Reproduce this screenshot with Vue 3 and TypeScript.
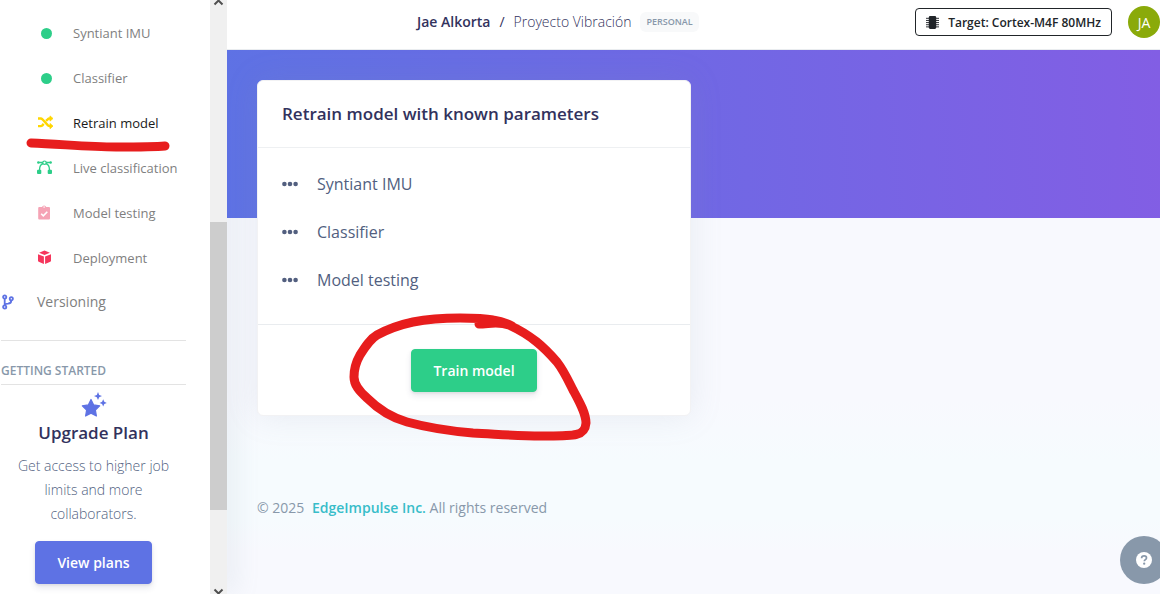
<script setup lang="ts">
interface NavItem {
  label: string
  icon: 'dot' | 'shuffle' | 'curve' | 'clipboard' | 'cube'
  active?: boolean
}

const navItems: NavItem[] = [
  { label: 'Syntiant IMU', icon: 'dot' },
  { label: 'Classifier', icon: 'dot' },
  { label: 'Retrain model', icon: 'shuffle', active: true },
  { label: 'Live classification', icon: 'curve' },
  { label: 'Model testing', icon: 'clipboard' },
  { label: 'Deployment', icon: 'cube' },
]

const steps: string[] = ['Syntiant IMU', 'Classifier', 'Model testing']
</script>

<template>
  <div class="page">
    <aside class="sidebar">
      <nav class="nav" aria-label="Project">
        <a
          v-for="item in navItems"
          :key="item.label"
          href="#"
          class="nav-link"
          :class="{ active: item.active }"
        >
          <svg v-if="item.icon === 'dot'" class="nav-icon" viewBox="0 0 16 16" aria-hidden="true">
            <circle cx="9.500" cy="8.500" r="5.500" fill="#2dce89" />
          </svg>
          <svg v-else-if="item.icon === 'shuffle'" class="nav-icon" viewBox="0 0 16 16" aria-hidden="true">
            <g fill="none" stroke="#ffd600" stroke-width="2.400">
              <path d="M1 3.500h2.700c.7 0 1.200.3 1.700.8l5.600 6c.5.500 1 .8 1.700.8h.8" />
              <path d="M1 11.100h2.700c.7 0 1.200-.3 1.700-.8l1.300-1.400M9 5.900l1.700-1.600c.500-.5 1-.8 1.700-.8h1.100" />
            </g>
            <path d="M13 .9v5.200l3-2.600zM13 8.500v5.200l3-2.600z" fill="#ffd600" stroke="#ffd600" stroke-width=".8" stroke-linejoin="round" />
          </svg>
          <svg v-else-if="item.icon === 'curve'" class="nav-icon" viewBox="0 0 16 16" aria-hidden="true">
            <g fill="none" stroke="#2dce89">
              <path d="M1.500 2.500h12M2.500 10c0-4 1.500-5.800 3.700-6.400M12.500 10c0-4-1.500-5.800-3.700-6.400" stroke-width="1.400" />
              <circle cx="7.500" cy="2.700" r="1.700" fill="#fff" stroke-width="1.200" />
            </g>
            <g fill="#2dce89">
              <circle cx="1.300" cy="2.500" r="1.200" />
              <circle cx="13.700" cy="2.500" r="1.200" />
              <rect x="0" y="9.700" width="4.300" height="4.200" rx="1" />
              <rect x="10.700" y="9.700" width="4.300" height="4.200" rx="1" />
            </g>
          </svg>
          <svg v-else-if="item.icon === 'clipboard'" class="nav-icon" viewBox="0 0 16 16" aria-hidden="true">
            <path d="M2.500 2H5a2.200 2.200 0 0 1 4.200 0h2.500c.8 0 1.300.5 1.300 1.300v10c0 .8-.5 1.300-1.300 1.300h-9.200c-.8 0-1.300-.5-1.300-1.300v-10c0-.8.5-1.300 1.300-1.300z" fill="#f5a3b5" />
            <circle cx="7.100" cy="2.100" r=".8" fill="#fff" />
            <path d="M4.200 8.700l2.100 2.100 4-4.100" fill="none" stroke="#fff" stroke-width="1.600" />
          </svg>
          <svg v-else class="nav-icon" viewBox="0 0 16 16" aria-hidden="true">
            <path d="M7.500 .5l5.400 2.200-5.400 2.300-5.400-2.300zM1 4.200l5.900 2.400v7.300L1.700 11.800C1.200 11.600 1 11.300 1 10.800zM14 4.200L8.100 6.600v7.300l5.200-2.100c.5-.2.7-.5.7-1z" fill="#f5365c" />
          </svg>
          <span>{{ item.label }}</span>
        </a>
        <a href="#" class="nav-link top-level">
          <svg class="nav-icon" viewBox="0 0 16 16" aria-hidden="true">
            <g fill="none" stroke="#5e72e4" stroke-width="1.800">
              <circle cx="3.700" cy="3" r="1.600" />
              <circle cx="3.700" cy="13" r="1.600" />
              <circle cx="10.300" cy="4.800" r="1.600" />
              <path d="M3.700 4.600v6.800M10.300 6.400c0 2.700-1.200 3-3.300 3.200-1.800.1-3 .5-3.300 1.500" />
            </g>
          </svg>
          <span>Versioning</span>
        </a>
      </nav>

      <h2 class="section-title">Getting started</h2>

      <section class="upgrade">
        <svg class="stars" viewBox="0 0 26 26" aria-hidden="true">
          <path d="M10 7.500l2.700 5.400 6 .9-4.300 4.200 1 6-5.400-2.800-5.400 2.800 1-6L1.300 13.800l6-.9z" fill="#5e72e4" stroke="#5e72e4" stroke-width="1.200" stroke-linejoin="round" />
          <path d="M17 0l1.200 2.900L21 4l-2.800 1.200L17 8l-1.200-2.800L13 4l2.800-1.100zM22.200 7.300l1.100 2.500 2.500 1.100-2.500 1.100-1.100 2.500-1.100-2.500-2.500-1.100 2.500-1.100z" fill="#5e72e4" />
        </svg>
        <h3>Upgrade Plan</h3>
        <p>Get access to higher job limits and more collaborators.</p>
        <button type="button" class="btn btn-primary">View plans</button>
      </section>

      <svg class="underline-mark" viewBox="0 0 150 20" aria-hidden="true">
        <path d="M9 8C38 9 66 12 94 12S132 12 143 11" fill="none" stroke="#e71d1d" stroke-width="9" stroke-linecap="round" />
      </svg>
    </aside>

    <div class="scrollbar" aria-hidden="true">
      <div class="track-before">
        <svg viewBox="0 0 17 6"><path d="M4.500 4.500l4-4 4 4" fill="none" stroke="#505050" stroke-width="2" /></svg>
      </div>
      <div class="thumb"></div>
      <div class="track-after">
        <svg viewBox="0 0 17 6"><path d="M4.500 1.500l4 4 4-4" fill="none" stroke="#505050" stroke-width="2" /></svg>
      </div>
    </div>

    <div class="main">
      <header class="topbar">
        <div class="crumbs">
          <a href="#" class="owner">Jae Alkorta</a>
          <span class="slash">/</span>
          <a href="#" class="project">Proyecto Vibración</a>
          <span class="badge">PERSONAL</span>
        </div>
        <div class="actions">
          <button type="button" class="target">
            <svg viewBox="0 0 14 14" aria-hidden="true">
              <rect x="3" y="0" width="8" height="14" rx="1.500" fill="#212529" />
              <path d="M0 2.500h14M0 4.800h14M0 7.100h14M0 9.400h14M0 11.700h14" stroke="#212529" stroke-width="1" />
            </svg>
            <span>Target: Cortex-M4F 80MHz</span>
          </button>
          <button type="button" class="avatar">JA</button>
        </div>
      </header>

      <main class="content">
        <section class="card">
          <h1>Retrain model with known parameters</h1>
          <ul>
            <li v-for="step in steps" :key="step">
              <svg viewBox="0 0 16 6" aria-hidden="true">
                <g fill="#525f7f">
                  <circle cx="2.400" cy="3" r="2.300" />
                  <circle cx="8" cy="3" r="2.300" />
                  <circle cx="13.600" cy="3" r="2.300" />
                </g>
              </svg>
              <span>{{ step }}</span>
            </li>
          </ul>
          <div class="card-footer">
            <button type="button" class="btn btn-success">Train model</button>
          </div>
          <svg class="circle-mark" viewBox="0 0 250 135" aria-hidden="true">
            <path d="M134 15C144 15 153 12 164 16C186 26 199 38 212 53C219 62 223 71 228 81C234 92 241 104 241 114C240 128 228 127 196 127C172 127 150 125 128 124C104 122 84 119 62 113C48 109 33 100 22 89C14 82 9 76 9 68C9 60 11 53 15 46C20 38 25 30 32 26C43 20 54 16 68 13C83 10 99 9 115 9C127 9 138 9 148 11C155 12 161 14 167 17" fill="none" stroke="#e71d1d" stroke-width="9" stroke-linecap="round" stroke-linejoin="round" />
          </svg>
        </section>
      </main>

      <footer class="footer">© 2025 <a href="#">EdgeImpulse Inc.</a> All rights reserved</footer>
    </div>

    <button type="button" class="help" aria-label="Help">
      <svg viewBox="0 0 16 16" aria-hidden="true">
        <circle cx="8" cy="8" r="8" fill="#fff" />
        <path d="M5.600 6.200c0-1.500 1-2.300 2.500-2.300s2.400.8 2.400 2c0 1.800-2.200 1.600-2.200 3.300" fill="none" stroke="#8898aa" stroke-width="1.700" />
        <circle cx="8.200" cy="11.700" r="1.150" fill="#8898aa" />
      </svg>
    </button>
  </div>
</template>

<style>
body {
  margin: 0;
}
</style>

<style scoped>
.page {
  position: relative;
  display: flex;
  min-height: 100vh;
  overflow: hidden;
  background: linear-gradient(#f8f9fe 400px, #f6fbfe 460px, #f6fbfe 520px, #f8f9fe 550px);
  color: #525f7f;
  font-family: "Open Sans", "Noto Sans", sans-serif;
  font-size: 16px;
  line-height: 24px;
}

.page * {
  box-sizing: border-box;
}

a {
  color: inherit;
  text-decoration: none;
}

button {
  font-family: inherit;
  cursor: pointer;
}

.sidebar {
  position: relative;
  flex: none;
  width: 210px;
  padding: 10px 24px 10px 1px;
  background: #fff;
}

.nav {
  padding-bottom: 16px;
  border-bottom: 1px solid #e3e3e3;
}

.nav-link {
  display: flex;
  align-items: center;
  height: 45px;
  padding-left: 36px;
  gap: 20px;
  color: #7f7f7f;
  font-size: 13px;
  white-space: nowrap;
}

.nav-link.active {
  color: #1a1a1a;
}

.nav-link.top-level {
  height: 44px;
  padding-left: 0;
  font-size: 14px;
}

.nav-icon {
  flex: none;
  width: 16px;
  height: 16px;
}

.section-title {
  margin: 0;
  padding: 17px 0 1px;
  border-bottom: 1px solid #e3e3e3;
  color: #8898aa;
  font-size: 12px;
  font-weight: 600;
  line-height: 25px;
  text-transform: uppercase;
}

.upgrade {
  display: flex;
  flex-direction: column;
  align-items: center;
  padding-top: 7px;
  text-align: center;
}

.stars {
  width: 26px;
  height: 26px;
}

.upgrade h3 {
  margin: 3px 0 9px;
  color: #32325d;
  font-size: 17px;
  font-weight: 600;
}

.upgrade p {
  margin: 0 0 15px;
  padding: 0 14px;
  font-size: 14px;
  font-weight: 300;
}

.btn {
  height: 43px;
  padding: 0 21px;
  border: 1px solid;
  border-radius: 4px;
  color: #fff;
  font-size: 14px;
  font-weight: 600;
  box-shadow: 0 4px 6px rgba(50, 50, 93, 0.11), 0 1px 3px rgba(0, 0, 0, 0.08);
}

.btn-primary {
  border-color: #5e72e4;
  background: #5e72e4;
}

.btn-success {
  border-color: #2dce89;
  background: #2dce89;
}

.underline-mark {
  position: absolute;
  top: 135px;
  left: 22px;
  width: 150px;
  height: 20px;
  pointer-events: none;
}

.scrollbar {
  display: flex;
  flex: none;
  flex-direction: column;
  width: 17px;
  background: #f0f0f0;
  box-shadow: 8px 0 24px rgba(136, 152, 170, 0.15);
}

.scrollbar svg {
  display: block;
  width: 17px;
  height: 6px;
}

.track-before {
  flex: 222;
}

.thumb {
  flex: 288;
  background: #cdcdcd;
}

.track-after {
  display: flex;
  flex: 84;
  align-items: flex-end;
}

.main {
  flex: 1;
  min-width: 0;
}

.topbar {
  display: flex;
  align-items: center;
  justify-content: space-between;
  height: 50px;
  padding: 0 0 5px 190px;
  border-bottom: 1px solid #e9ecef;
  background: #fff;
  white-space: nowrap;
}

.crumbs {
  display: flex;
  align-items: center;
  gap: 9px;
  color: #32325d;
  font-size: 14px;
}

.owner {
  font-weight: 600;
}

.project {
  font-weight: 300;
}

.badge {
  padding: 0 6px;
  border-radius: 6px;
  background: #f8f9fa;
  color: #8898aa;
  font-size: 9px;
  font-weight: 600;
  line-height: 20px;
}

.actions {
  display: flex;
  align-items: center;
  gap: 16px;
}

.target {
  display: flex;
  align-items: center;
  height: 28px;
  padding: 0 10px;
  gap: 9px;
  border: 1px solid #212529;
  border-radius: 4px;
  background: #fff;
  color: #212529;
  font-size: 12px;
  font-weight: 600;
}

.target svg {
  width: 13px;
  height: 13px;
}

.avatar {
  width: 32px;
  height: 32px;
  padding: 0;
  border: 0;
  border-radius: 50%;
  background: #8aaa0a;
  color: #fff;
  font-size: 14px;
}

.content {
  display: grid;
  grid-template-columns: 1fr 1fr;
  gap: 35px;
  padding: 30px 0 0 30px;
  background: linear-gradient(87deg, #5e72e4, #825ee4) top / 100% 168px no-repeat;
}

.card {
  position: relative;
  border: 1px solid #f2f2f4;
  border-radius: 6px;
  background: #fff;
  box-shadow: 0 0 32px rgba(136, 152, 170, 0.15);
}

.card h1 {
  margin: 0;
  padding: 21px 24px;
  border-bottom: 1px solid #eef0f2;
  color: #32325d;
  font-size: 17px;
  font-weight: 600;
}

.card ul {
  margin: 0;
  padding: 12px 24px 20px;
  list-style: none;
}

.card li {
  display: flex;
  align-items: center;
  height: 48px;
  gap: 19px;
}

.card li svg {
  width: 16px;
  height: 6px;
}

.card-footer {
  display: flex;
  justify-content: center;
  padding: 24px 24px 23px;
  border-top: 1px solid #e9ecef;
}

.circle-mark {
  position: absolute;
  top: 228px;
  left: 87px;
  width: 250px;
  height: 135px;
  pointer-events: none;
}

.footer {
  padding: 80px 30px 24px;
  color: #8898aa;
  font-size: 14px;
}

.footer a {
  margin-left: 4px;
  color: #38bdc9;
  font-weight: 600;
}

.help {
  position: absolute;
  right: -8px;
  bottom: 10px;
  display: flex;
  align-items: center;
  justify-content: center;
  width: 48px;
  height: 48px;
  padding: 0;
  border: 0;
  border-radius: 50%;
  background: #8898aa;
}

.help svg {
  width: 16px;
  height: 16px;
}
</style>
